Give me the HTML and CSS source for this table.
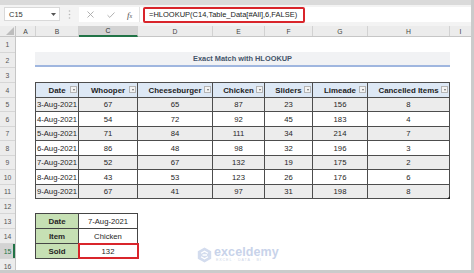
FILE: index.html
```html
<!DOCTYPE html>
<html>
<head>
<meta charset="utf-8">
<link rel="stylesheet" href="styles.css">
</head>
<body>
<div class="app">
  <div class="ribbon"></div>
  <div class="fbar">
    <div class="namebox"><span>C15</span>
      <svg class="caret" width="5" height="3" viewBox="0 0 5 3"><path d="M0 0H5L2.5 3Z" fill="#555"/></svg>
    </div>
    <div class="dots">
      <svg width="3" height="9" viewBox="0 0 3 9"><circle cx="1.5" cy="1" r="0.8" fill="#b8b8b8"/><circle cx="1.5" cy="4.5" r="0.8" fill="#b8b8b8"/><circle cx="1.5" cy="8" r="0.8" fill="#b8b8b8"/></svg>
    </div>
    <div class="formula">
      <div class="fbtn bx"><svg width="7" height="7" viewBox="0 0 7 7"><path d="M0.5 0.5L6.5 6.5M6.5 0.5L0.5 6.5" stroke="#a8a8a8" stroke-width="0.9"/></svg></div>
      <div class="fbtn bok"><svg width="8" height="6" viewBox="0 0 8 6"><path d="M0.5 3.2L2.8 5.4L7.5 0.5" stroke="#a8a8a8" stroke-width="0.9" fill="none"/></svg></div>
      <div class="fbtn bfx"><span class="ff">f</span><span class="fxs">x</span></div>
      <div class="finput">=HLOOKUP(C14,Table_Data[#All],6,FALSE)</div>
    </div>
  </div>
  <div class="colheads">
    <div class="ch corner"><svg width="8" height="8" viewBox="0 0 8 8"><path d="M8 0V8H0Z" fill="#bdbdbd"/></svg></div>
    <div class="ch wa">A</div>
    <div class="ch wb">B</div>
    <div class="ch wc sel">C</div>
    <div class="ch wd">D</div>
    <div class="ch we">E</div>
    <div class="ch wf">F</div>
    <div class="ch wg">G</div>
    <div class="ch wh">H</div>
    <div class="ch wi">I</div>
  </div>
  <div class="sheet">
    <div class="rowheads">
      <div class="rh h16">1</div>
      <div class="rh h15">2</div>
      <div class="rh h15">3</div>
      <div class="rh h15">4</div>
      <div class="rh h14">5</div>
      <div class="rh h15">6</div>
      <div class="rh h14">7</div>
      <div class="rh h15">8</div>
      <div class="rh h14">9</div>
      <div class="rh h15">10</div>
      <div class="rh h14">11</div>
      <div class="rh h15">12</div>
      <div class="rh h15">13</div>
      <div class="rh h15">14</div>
      <div class="rh h15 rsel">15</div>
      <div class="rh h15">16</div>
    </div>
    <div class="canvas">
      <div class="title">Exact Match with HLOOKUP</div>
      <div class="gap3"></div>
      <div class="dt">
        <div class="c hd">Date<span class="fb"></span></div>
        <div class="c hd">Whooper<span class="fb"></span></div>
        <div class="c hd">Cheeseburger<span class="fb"></span></div>
        <div class="c hd">Chicken<span class="fb"></span></div>
        <div class="c hd">Sliders<span class="fb"></span></div>
        <div class="c hd">Limeade<span class="fb"></span></div>
        <div class="c hd">Cancelled Items<span class="fb"></span></div>

        <div class="c g">3-Aug-2021</div><div class="c g">67</div><div class="c g">65</div><div class="c g">87</div><div class="c g">23</div><div class="c g">156</div><div class="c g">8</div>
        <div class="c">4-Aug-2021</div><div class="c">54</div><div class="c">72</div><div class="c">92</div><div class="c">45</div><div class="c">183</div><div class="c">4</div>
        <div class="c g">5-Aug-2021</div><div class="c g">71</div><div class="c g">84</div><div class="c g">111</div><div class="c g">34</div><div class="c g">214</div><div class="c g">7</div>
        <div class="c">6-Aug-2021</div><div class="c">86</div><div class="c">48</div><div class="c">98</div><div class="c">32</div><div class="c">196</div><div class="c">3</div>
        <div class="c g">7-Aug-2021</div><div class="c g">52</div><div class="c g">67</div><div class="c g">132</div><div class="c g">19</div><div class="c g">175</div><div class="c g">2</div>
        <div class="c">8-Aug-2021</div><div class="c">43</div><div class="c">53</div><div class="c">123</div><div class="c">26</div><div class="c">176</div><div class="c">6</div>
        <div class="c g">9-Aug-2021</div><div class="c g">67</div><div class="c g">41</div><div class="c g">97</div><div class="c g">31</div><div class="c g">198</div><div class="c g">8</div>
      </div>
      <div class="gap12"></div>
      <div class="lk">
        <div class="c lb">Date</div><div class="c">7-Aug-2021</div>
        <div class="c lb">Item</div><div class="c">Chicken</div>
        <div class="c lb">Sold</div><div class="c active">132</div>
      </div>
      <div class="wm">
        <svg class="wm-icon" width="15" height="16" viewBox="0 0 15 16">
          <path d="M7.5 0.5L14.2 4.3V11.7L7.5 15.5L0.8 11.7V4.3Z" fill="#d3dcee"/>
          <path d="M4 6.2L7.5 4.2L11 6.2M4 9.8L7.5 11.8L11 9.8M5.5 8H10" stroke="#ffffff" stroke-width="1.3" fill="none"/>
        </svg>
        <div class="wm-text">
          <div class="wm-name">exceldemy</div>
          <div class="wm-sub">EXCEL · DATA · BI</div>
        </div>
      </div>
    </div>
  </div>
</div>
</body>
</html>
```
FILE: styles.css
```css
* { box-sizing: border-box; margin: 0; padding: 0; }
html, body { width: 474px; height: 273px; overflow: hidden; }
body { background: #cbcbcb; font-family: "Liberation Sans", Arial, sans-serif; }

.app { width: 471px; height: 270px; background: #fff; overflow: hidden; display: flex; flex-direction: column; }

.ribbon { height: 5px; background: #dadada; flex: none; }
.fbar { height: 21px; flex: none; background: #f3f3f3; display: flex; align-items: flex-start; padding-top: 2px; }
.namebox { margin-left: 4px; width: 56px; height: 14px; background: #fff; border: 1px solid #d9d9d9; display: flex; align-items: center; justify-content: space-between; padding: 0 3px 0 4px; font-size: 7.5px; color: #333; }
.dots { width: 19px; height: 14px; display: flex; align-items: center; justify-content: center; }
.formula { flex: 1; height: 15px; background: #fff; display: flex; align-items: center; }
.fbtn { height: 15px; display: flex; align-items: center; justify-content: center; }
.bx { width: 22px; }
.bok { width: 19px; }
.bfx { width: 20px; border-right: 1px solid #e2e2e2; font-family: "Liberation Serif", serif; font-style: italic; color: #505050; }
.ff { font-size: 9px; }
.fxs { font-size: 6px; margin-top: 3px; }
.finput { margin-left: 3px; width: 162px; height: 16px; border: 2px solid #d9252b; border-radius: 2px; font-size: 7.5px; color: #222; padding-left: 4px; display: flex; align-items: center; white-space: nowrap; }

.colheads { height: 11px; flex: none; display: flex; background: #ececec; border-bottom: 1px solid #c6c6c6; }
.ch { height: 10px; border-right: 1px solid #d2d2d2; font-size: 6.8px; color: #444; display: flex; align-items: center; justify-content: center; }
.corner { width: 16px; justify-content: flex-end; align-items: flex-end; padding: 0 1px 1px 0; border-right-color: #c6c6c6; }
.wa { width: 20px; } .wb { width: 43px; } .wc { width: 59px; } .wd { width: 75px; } .we { width: 52px; }
.wf { width: 48px; } .wg { width: 55px; } .wh { width: 82px; } .wi { width: 21px; border-right: none; }
.sel { background: #d3d3d3; border-bottom: 2px solid #217346; height: 11px; color: #2b2b2b; }

.sheet { flex: 1; display: flex; min-height: 0; }
.rowheads { width: 16px; flex: none; background: #ececec; border-right: 1px solid #c6c6c6; display: flex; flex-direction: column; }
.rh { flex: none; font-size: 6.8px; color: #555; border-bottom: 1px solid #d6d6d6; display: flex; align-items: center; justify-content: center; }
.h14 { height: 14px; } .h15 { height: 15px; } .h16 { height: 16px; }
.rsel { background: #d3d3d3; color: #217346; box-shadow: inset -2px 0 0 #217346; }

.canvas { flex: 1; position: relative; padding-top: 15px; }
.title { margin-left: 19px; width: 415px; height: 15px; background: #f1f2f4; border-bottom: 2px solid #9fb6df; font-weight: bold; font-size: 7.4px; color: #44546a; display: flex; align-items: center; justify-content: center; }
.gap3 { height: 15px; }
.gap12 { height: 14px; }

.dt { margin-left: 19px; width: 415px; display: grid; grid-template-columns: 42px 58px 74px 51px 47px 54px 81px; grid-template-rows: 14px 13px 14px 13px 14px 13px 14px 13px; gap: 1px; padding: 1px; background: #4d4d4d; position: relative; }
.dt::after { content: ""; position: absolute; right: 0; bottom: 0; width: 3px; height: 3px; background: #222; clip-path: polygon(100% 0, 100% 100%, 0 100%); }
.c { background: #fff; display: flex; align-items: center; justify-content: center; font-size: 7.7px; color: #262626; white-space: nowrap; }
.g { background: #ececec; }
.hd { background: #dde8f5; font-weight: bold; font-size: 7.9px; color: #1e1e1e; position: relative; }
.fb { position: absolute; right: 1px; top: 3px; width: 7px; height: 7px; border: 1px solid #b5b5b5; background: #f3f3f3; display: flex; align-items: center; justify-content: center; }
.fb::after { content: ""; border-left: 1.5px solid transparent; border-right: 1.5px solid transparent; border-top: 2px solid #6a6a6a; }

.lk { margin-left: 19px; width: 103px; display: grid; grid-template-columns: 42px 58px; grid-template-rows: 14px 14px 14px; gap: 1px; padding: 1px; background: #454545; }
.lb { background: #c6e0b4; font-weight: bold; font-size: 7.9px; }
.active { position: relative; }
.active::after { content: ""; position: absolute; top: -1px; left: -1px; right: -2px; bottom: -1px; border: 2px solid #d9252b; }

.wm { position: absolute; left: 181px; top: 209px; display: flex; align-items: flex-start; gap: 2px; }
.wm-icon { margin-top: 1px; }
.wm-text { display: flex; flex-direction: column; }
.wm-name { font-size: 12.5px; line-height: 12px; color: #c8d3ea; font-weight: bold; letter-spacing: 0.1px; }
.wm-sub { font-size: 3.6px; line-height: 4px; color: #cdd6e8; letter-spacing: 0.9px; margin-left: 2px; }
```
